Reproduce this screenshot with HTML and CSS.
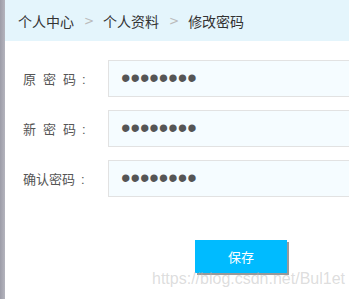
FILE: index.html
```html
<!DOCTYPE html>
<html lang="zh-CN">
<head>
    <meta charset="UTF-8">
    <title>修改密码</title>
    <link rel="stylesheet" href="styles.css">
</head>
<body>
    <div class="page">
        <div class="side"></div>
        <div class="main">
            <div class="crumbs">
                <span>个人中心</span>
                <span class="sep">&gt;</span>
                <span>个人资料</span>
                <span class="sep">&gt;</span>
                <span>修改密码</span>
            </div>

            <form class="pwd-form">
                <div class="row">
                    <label><span class="spaced">原密</span>码<span class="colon">:</span></label>
                    <input type="password" value="12345678">
                </div>
                <div class="row">
                    <label><span class="spaced">新密</span>码<span class="colon">:</span></label>
                    <input type="password" value="12345678">
                </div>
                <div class="row">
                    <label>确认密码<span class="colon">:</span></label>
                    <input type="password" value="12345678">
                </div>
                <div class="actions">
                    <button type="button" class="save">保存</button>
                </div>
            </form>
            <div class="mark">https://blog.csdn.net/Bul1et</div>
        </div>
    </div>
</body>
</html>
```

FILE: styles.css
```css
body {
    margin: 0;
    font-family: "Liberation Sans", "Noto Sans CJK SC", sans-serif;
    background: #fff;
}

.page {
    display: flex;
    height: 299px;
    overflow: hidden;
}

.side {
    flex: 0 0 5px;
    background: linear-gradient(to right, #9d9da8, #b4b4bd);
}

.main {
    flex: 1;
    min-width: 0;
    position: relative;
}

.crumbs {
    height: 41px;
    background: #e4f5fc;
    display: flex;
    align-items: center;
    padding-left: 13px;
    font-size: 14px;
    color: #333;
}

.crumbs .sep {
    color: #bbb;
    margin: 0 9px 0 10px;
    font-family: "DejaVu Sans", sans-serif;
    font-size: 12px;
}

.pwd-form {
    padding-top: 19px;
}

.row {
    display: flex;
    align-items: center;
    margin-bottom: 13px;
}

.row label {
    flex: 0 0 103px;
    box-sizing: border-box;
    padding-left: 18px;
    font-size: 13px;
    color: #555;
    white-space: nowrap;
}

.row label .spaced {
    letter-spacing: 7px;
}

.row label .colon {
    margin-left: 6px;
}

.row input {
    width: 260px;
    height: 37px;
    box-sizing: border-box;
    border: 1px solid #e2e2e2;
    background: #f5fcff;
    padding-left: 12px;
    font-size: 27px;
    color: #555;
    outline: none;
}

.actions {
    padding: 30px 0 0 190px;
}

.save {
    width: 92px;
    height: 33px;
    border: none;
    background: #00bbff;
    color: #fff;
    font-size: 13px;
    font-family: "Noto Sans CJK SC", sans-serif;
    box-shadow: 2px 2px 0 #999;
    cursor: pointer;
}

.mark {
    position: absolute;
    left: 147px;
    top: 270px;
    font-size: 16px;
    color: rgba(180, 180, 180, 0.45);
}
```
